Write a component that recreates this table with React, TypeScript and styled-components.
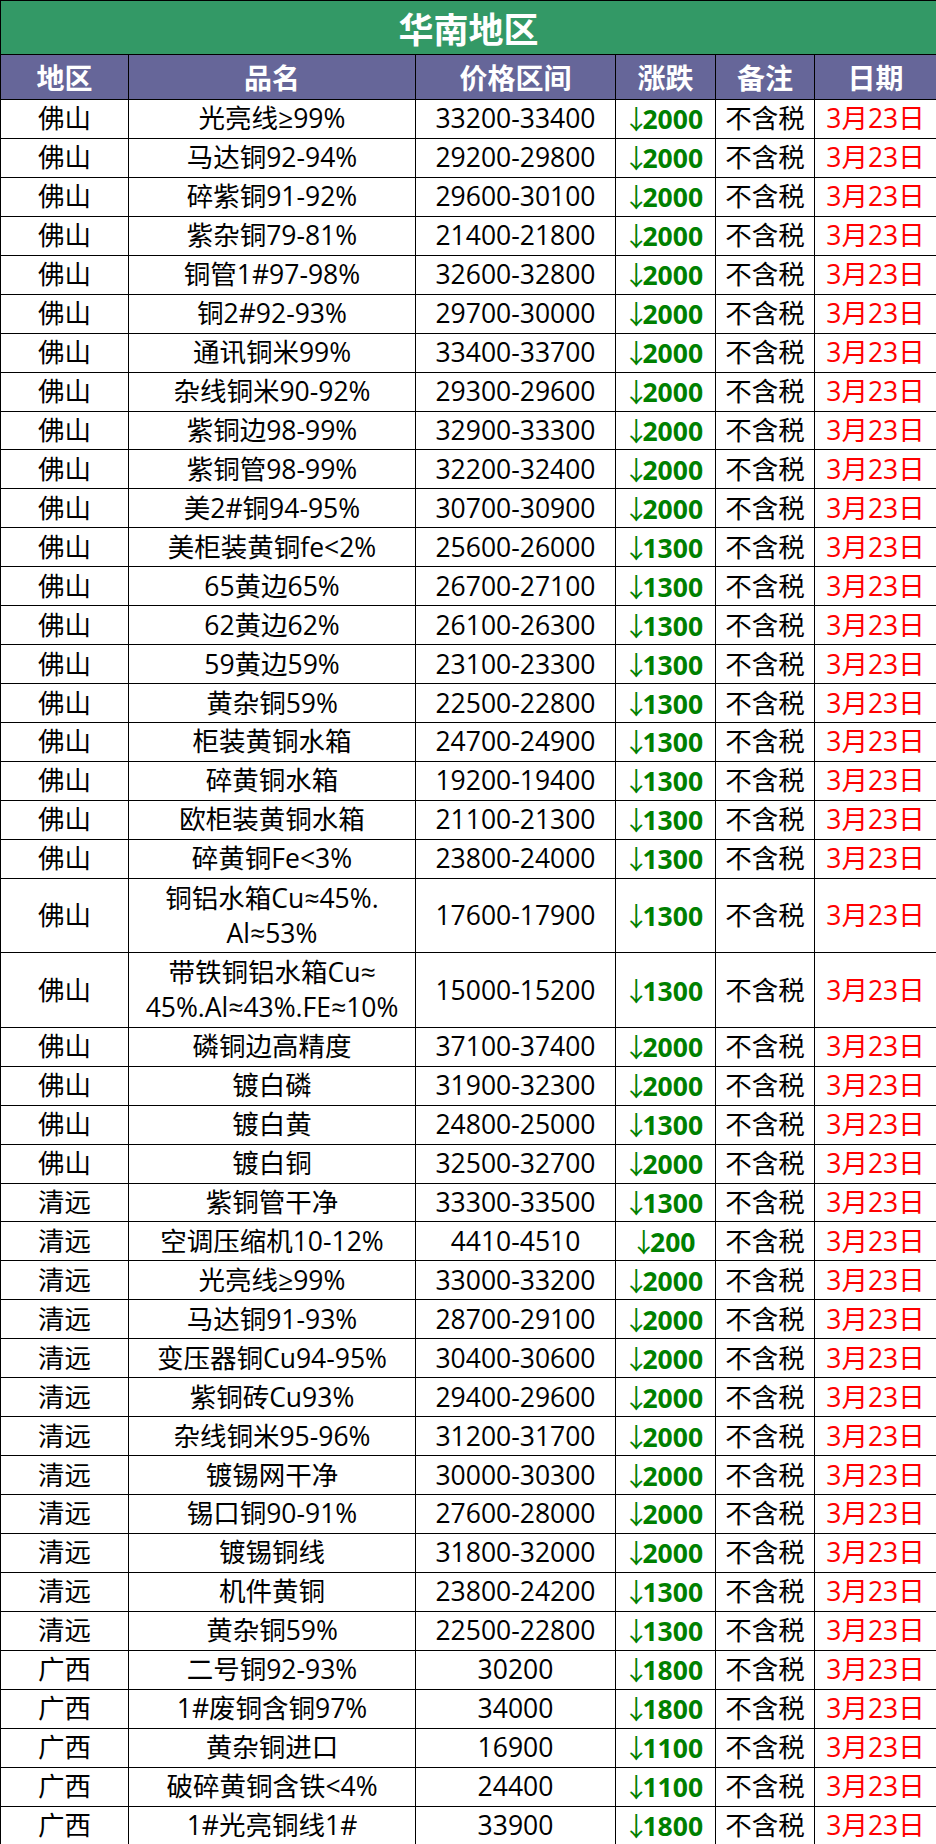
import React from "react";
import styled, { createGlobalStyle } from "styled-components";

const Global = createGlobalStyle`
  html, body { margin: 0; padding: 0; background: #ffffff; }
  body { font-family: "Open Sans", "Noto Sans CJK SC", sans-serif; }
`;

const Table = styled.table`
  width: 936px;
  table-layout: fixed;
  border-collapse: collapse;
  font-family: "Open Sans", "Noto Sans CJK SC", sans-serif;
`;

const TitleCell = styled.th`
  height: 53px;
  padding: 0;
  background: #339966;
  color: #ffffff;
  font-size: 35px;
  font-weight: 700;
  font-family: "Noto Sans CJK SC", sans-serif;
  border: 1.5px solid #000;
  text-align: center;
  vertical-align: middle;
  line-height: 1;
`;

const HeadCell = styled.th`
  height: 44px;
  padding: 0;
  background: #666699;
  color: #ffffff;
  font-size: 28px;
  font-weight: 700;
  font-family: "Noto Sans CJK SC", sans-serif;
  border: 1.5px solid #000;
  text-align: center;
  vertical-align: middle;
  line-height: 1;
`;

const Row = styled.tr<{ $tall?: boolean }>`
  height: ${(p) => (p.$tall ? "74.5px" : "38.95px")};
`;

const Cell = styled.td<{ $tone?: "green" | "red" }>`
  padding: 0;
  border: 1.5px solid #000;
  text-align: center;
  vertical-align: middle;
  white-space: nowrap;
  overflow: hidden;
  font-size: 26.5px;
  line-height: 35px;
  color: ${(p) => (p.$tone === "green" ? "#008000" : p.$tone === "red" ? "#ff0000" : "#000000")};
  font-weight: ${(p) => (p.$tone === "green" ? 700 : 400)};
`;

const Arrow = styled.span`
  font-weight: 400;
  font-family: "Noto Sans CJK SC", sans-serif;
  letter-spacing: -7px;
  margin-left: -5px;
`;

type Item = [string, string, string, string];

const rows: Item[] = [
  ["佛山", "光亮线≥99%", "33200-33400", "2000"],
  ["佛山", "马达铜92-94%", "29200-29800", "2000"],
  ["佛山", "碎紫铜91-92%", "29600-30100", "2000"],
  ["佛山", "紫杂铜79-81%", "21400-21800", "2000"],
  ["佛山", "铜管1#97-98%", "32600-32800", "2000"],
  ["佛山", "铜2#92-93%", "29700-30000", "2000"],
  ["佛山", "通讯铜米99%", "33400-33700", "2000"],
  ["佛山", "杂线铜米90-92%", "29300-29600", "2000"],
  ["佛山", "紫铜边98-99%", "32900-33300", "2000"],
  ["佛山", "紫铜管98-99%", "32200-32400", "2000"],
  ["佛山", "美2#铜94-95%", "30700-30900", "2000"],
  ["佛山", "美柜装黄铜fe<2%", "25600-26000", "1300"],
  ["佛山", "65黄边65%", "26700-27100", "1300"],
  ["佛山", "62黄边62%", "26100-26300", "1300"],
  ["佛山", "59黄边59%", "23100-23300", "1300"],
  ["佛山", "黄杂铜59%", "22500-22800", "1300"],
  ["佛山", "柜装黄铜水箱", "24700-24900", "1300"],
  ["佛山", "碎黄铜水箱", "19200-19400", "1300"],
  ["佛山", "欧柜装黄铜水箱", "21100-21300", "1300"],
  ["佛山", "碎黄铜Fe<3%", "23800-24000", "1300"],
  ["佛山", "铜铝水箱Cu≈45%.|Al≈53%", "17600-17900", "1300"],
  ["佛山", "带铁铜铝水箱Cu≈|45%.Al≈43%.FE≈10%", "15000-15200", "1300"],
  ["佛山", "磷铜边高精度", "37100-37400", "2000"],
  ["佛山", "镀白磷", "31900-32300", "2000"],
  ["佛山", "镀白黄", "24800-25000", "1300"],
  ["佛山", "镀白铜", "32500-32700", "2000"],
  ["清远", "紫铜管干净", "33300-33500", "1300"],
  ["清远", "空调压缩机10-12%", "4410-4510", "200"],
  ["清远", "光亮线≥99%", "33000-33200", "2000"],
  ["清远", "马达铜91-93%", "28700-29100", "2000"],
  ["清远", "变压器铜Cu94-95%", "30400-30600", "2000"],
  ["清远", "紫铜砖Cu93%", "29400-29600", "2000"],
  ["清远", "杂线铜米95-96%", "31200-31700", "2000"],
  ["清远", "镀锡网干净", "30000-30300", "2000"],
  ["清远", "锡口铜90-91%", "27600-28000", "2000"],
  ["清远", "镀锡铜线", "31800-32000", "2000"],
  ["清远", "机件黄铜", "23800-24200", "1300"],
  ["清远", "黄杂铜59%", "22500-22800", "1300"],
  ["广西", "二号铜92-93%", "30200", "1800"],
  ["广西", "1#废铜含铜97%", "34000", "1800"],
  ["广西", "黄杂铜进口", "16900", "1100"],
  ["广西", "破碎黄铜含铁<4%", "24400", "1100"],
  ["广西", "1#光亮铜线1#", "33900", "1800"],
];

const widths = [128, 287, 200, 100, 99, 122];
const heads = ["地区", "品名", "价格区间", "涨跌", "备注", "日期"];

export default function App() {
  return (
    <>
      <Global />
      <Table>
        <colgroup>
          {widths.map((w, i) => (
            <col key={i} style={{ width: w }} />
          ))}
        </colgroup>
        <thead>
          <tr>
            <TitleCell colSpan={6}>华南地区</TitleCell>
          </tr>
          <tr>
            {heads.map((h) => (
              <HeadCell key={h}>{h}</HeadCell>
            ))}
          </tr>
        </thead>
        <tbody>
          {rows.map(([area, name, price, change], i) => {
            const parts = name.split("|");
            return (
              <Row key={i} $tall={parts.length > 1}>
                <Cell>{area}</Cell>
                <Cell>
                  {parts.map((p, j) => (
                    <React.Fragment key={j}>
                      {j > 0 && <br />}
                      {p}
                    </React.Fragment>
                  ))}
                </Cell>
                <Cell>{price}</Cell>
                <Cell $tone="green">
                  <Arrow>↓</Arrow>
                  {change}
                </Cell>
                <Cell>不含税</Cell>
                <Cell $tone="red">3月23日</Cell>
              </Row>
            );
          })}
        </tbody>
      </Table>
    </>
  );
}
